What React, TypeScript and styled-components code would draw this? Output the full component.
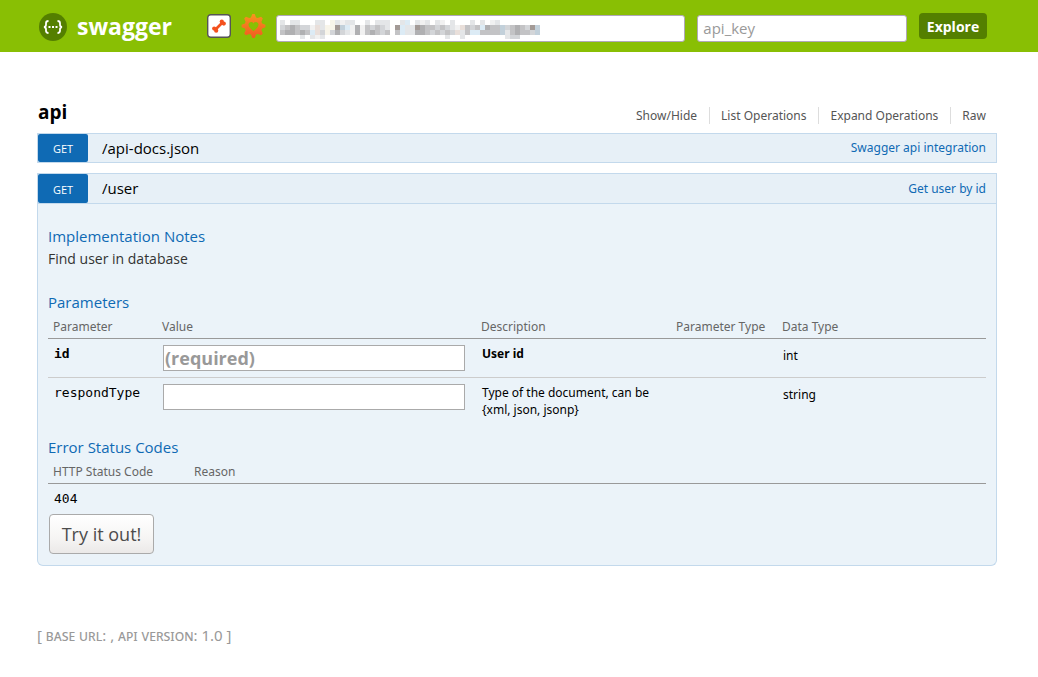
import React from "react";
import styled, { createGlobalStyle } from "styled-components";

const Global = createGlobalStyle`
  *, *::before, *::after { box-sizing: border-box; }
  body { margin: 0; background: #fff; color: #000; font-family: "Open Sans", "Noto Sans", sans-serif; font-size: 13px; }
  h2, h3, h4, p, ul { margin: 0; padding: 0; font-weight: normal; }
  ul { list-style: none; }
  a { text-decoration: none; color: inherit; }
  button, input { font-family: inherit; }
`;

const smallFont = '"Noto Sans", "Open Sans", sans-serif';

const Header = styled.header`
  background: #89bf04;
`;
const HeaderInner = styled.div`
  margin: 0 51px 0 38px;
  height: 52px;
  display: flex;
  align-items: center;
`;
const Logo = styled.a`
  display: flex;
  align-items: center;
  gap: 9px;
  color: #fff;
  font-size: 23px;
  line-height: 32px;
  font-weight: 700;
  flex: 0 0 169px;
`;
const Form = styled.form`
  display: flex;
  align-items: center;
  flex: 1;
`;
const IconButton = styled.button`
  display: flex;
  padding: 0;
  border: 0;
  background: none;
  margin-right: 10px;
`;
const FieldWrap = styled.div<{ $grow: number }>`
  flex: ${(p) => p.$grow} 1 0;
  margin: 4px 12px 0 0;
  position: relative;
`;
const HeaderInput = styled.input`
  display: block;
  width: 100%;
  height: 27px;
  padding: 0 5px;
  border: 1px solid #b0a8b8;
  border-radius: 3px;
  font-size: 15px;
  color: #333;
  background: #fff;
  &::placeholder { color: #999; opacity: 1; }
`;
const MosaicSvg = styled.svg`
  position: absolute;
  left: 4px;
  top: 5px;
`;
const Explore = styled.button`
  height: 26px;
  flex: 0 0 68px;
  padding: 0;
  border: 0;
  border-radius: 4px;
  background: #547f00;
  color: #fff;
  font-size: 14px;
  font-weight: 700;
`;

const Main = styled.main`
  margin: 46px 41px 0 37px;
`;
const ResourceHead = styled.div`
  display: flex;
  justify-content: space-between;
  align-items: flex-end;
  height: 35px;
`;
const Title = styled.h2`
  font-size: 19px;
  line-height: 28px;
  font-weight: 700;
  padding: 0 0 7px 1px;
`;
const Options = styled.ul`
  display: flex;
  padding: 0 11px 9px 0;
`;
const Option = styled.li`
  color: #555;
  font-family: ${smallFont};
  font-size: 12px;
  line-height: 17px;
  & + & { border-left: 1px solid #ddd; margin-left: 12px; padding-left: 11px; }
`;
const Operation = styled.section`
  margin-bottom: 10px;
`;
const Heading = styled.h3<{ $open?: boolean }>`
  display: flex;
  align-items: stretch;
  height: ${(p) => (p.$open ? 31 : 30)}px;
  line-height: ${(p) => (p.$open ? 29 : 28)}px;
  background: #e7f0f7;
  border: 1px solid #c3d9ec;
`;
const Method = styled.a`
  width: 50px;
  padding-top: 1px;
  background: #0f6ab4;
  color: #fff;
  border-radius: 2px;
  font-size: 11px;
  text-align: center;
`;
const Path = styled.a`
  flex: 1;
  padding-left: 14px;
  font-size: 15px;
`;
const Summary = styled.a`
  padding-right: 10px;
  color: #0f6ab4;
  font-family: ${smallFont};
  font-size: 12px;
`;
const Content = styled.div`
  background: #ebf3f9;
  border: 1px solid #c3d9ec;
  border-top: 0;
  border-radius: 0 0 6px 6px;
  padding: 21px 10px 11px;
`;
const SubHead = styled.h4`
  color: #0f6ab4;
  font-size: 15px;
  line-height: 22px;
`;
const Notes = styled.p`
  color: #333;
  font-size: 14px;
  line-height: 24px;
  margin-bottom: 20px;
`;
const Table = styled.table`
  width: 100%;
  border-collapse: collapse;
  table-layout: fixed;
  font-family: ${smallFont};
`;
const Th = styled.th<{ $w?: number }>`
  width: ${(p) => (p.$w ? p.$w + "px" : "auto")};
  padding: 5px 0 3px 5px;
  border-bottom: 1px solid #999;
  color: #666;
  font-size: 12px;
  line-height: 17px;
  font-weight: 400;
  text-align: left;
  white-space: nowrap;
`;
const Td = styled.td<{ $mono?: boolean; $bold?: boolean; $type?: boolean }>`
  padding: ${(p) => (p.$type ? 8 : 6)}px 6px 0;
  vertical-align: top;
  font-size: ${(p) => (p.$mono ? 13 : 12)}px;
  line-height: 17px;
  font-family: ${(p) => (p.$mono ? '"DejaVu Sans Mono", monospace' : "inherit")};
  font-weight: ${(p) => (p.$bold ? 700 : 400)};
`;
const Row = styled.tr`
  height: 39px;
  & + & { border-top: 1px solid #ccc; }
`;
const ValueInput = styled.input`
  display: block;
  width: 302px;
  height: 26px;
  padding: 0 1px;
  border: 1px solid #aaa;
  background: #fff;
  font-family: "Open Sans", sans-serif;
  font-size: 18px;
  font-weight: 700;
  &::placeholder { color: #999; opacity: 1; }
`;
const Codes = styled.div`
  margin-top: 18px;
`;
const Try = styled.button`
  display: block;
  width: 105px;
  height: 40px;
  margin: 7px 0 0 1px;
  padding: 0;
  border: 1px solid #aaa;
  border-radius: 4px;
  background: linear-gradient(#fff, #f6f5f4 60%, #ebe9e8);
  color: #4c4c4c;
  font-size: 18px;
`;
const Footer = styled.footer`
  margin-top: 57px;
  color: #999;
  font-family: ${smallFont};
  font-size: 15px;
  line-height: 24px;
  span { font-variant: small-caps; }
`;

const shades: Record<string, string> = {
  a: "#f1f1f1", b: "#e4e6e8", c: "#d3d5d8", d: "#c3c3c5", e: "#b0b0b2",
  f: "#a39a96", g: "#dcebf5", h: "#e9dfda", i: "#c2d0da", j: "#f8f5ea",
};
const mosaicRows = [
  "b.bb...bb.jbabb..b.bbb..bg.bab.ba.b...b.b.ab........",
  "cdedccahbjjfigaeadcdcb.fgbbfeddcdcbahdcdgeddicdedcfi",
  "deededghcjcecbaeadedcd.dgbbeedcdcdchbdggddddibdeddci",
  "....b.bab........................b..b........bcc....",
];
const Mosaic = () => (
  <MosaicSvg width="260" height="19" aria-hidden="true">
    {mosaicRows.map((row, y) =>
      row.split("").map((s, x) =>
        s === "." ? null : <rect key={x + "-" + y} x={x * 5} y={y * 5} width="5" height="5" fill={shades[s]} />,
      ),
    )}
  </MosaicSvg>
);

const gearPoints = Array.from({ length: 32 }, (_, i) => {
  const r = i % 4 < 2 ? 12 : 9;
  const a = ((i - 0.5) * Math.PI) / 16 - Math.PI / 2;
  return `${(12 + r * Math.cos(a)).toFixed(1)},${(12 + r * Math.sin(a)).toFixed(1)}`;
}).join(" ");

const App = () => (
  <>
    <Global />
    <Header>
      <HeaderInner>
        <Logo href="#">
          <svg width="30" height="30" viewBox="0 0 30 30" aria-hidden="true">
            <circle cx="15" cy="16" r="14" fill="#547f00" />
            <g transform="translate(0 1)">
              <path d="M10.500 9c-2 0-2.500.7-2.500 2.200v1.500c0 1.400-.5 2.100-2 2.300 1.500.2 2 .9 2 2.300v1.500c0 1.500.5 2.200 2.500 2.200M19.500 9c2 0 2.500.7 2.500 2.200v1.500c0 1.400.5 2.100 2 2.300-1.500.2-2 .9-2 2.300v1.500c0 1.500-.5 2.200-2.500 2.200" fill="none" stroke="#fff" strokeWidth="1.800" />
              <path d="M10.500 14h2v2h-2zM14 14h2v2h-2zM17.500 14h2v2h-2z" fill="#fff" />
            </g>
          </svg>
          swagger
        </Logo>
        <Form onSubmit={(e) => e.preventDefault()}>
          <IconButton type="button" aria-label="Show Swagger Petstore example APIs">
            <svg width="24" height="24" viewBox="0 0 24 24">
              <rect x="0.700" y="0.700" width="22.600" height="22.600" rx="3" fill="#fff" stroke="#555" strokeWidth="1.400" />
              <path d="M8 16L16 8" stroke="#f4511e" strokeWidth="2.600" />
              <g fill="#f4511e">
                <circle cx="14.800" cy="7.500" r="2.100" /><circle cx="16.800" cy="9.600" r="2.100" />
                <circle cx="7.200" cy="14.600" r="2.100" /><circle cx="9.200" cy="16.700" r="2.100" />
              </g>
            </svg>
          </IconButton>
          <IconButton type="button" aria-label="Show Wordnik Developer APIs">
            <svg width="25" height="24" viewBox="0 0 24 24">
              <defs><linearGradient id="gear" x1="0" y1="0" x2="0" y2="1"><stop offset="0" stopColor="#f7941e" /><stop offset="1" stopColor="#f15a22" /></linearGradient></defs>
              <polygon points={gearPoints} fill="url(#gear)" />
              <path d="M12 17.200C9.500 15.200 7 13.300 7 10.600c0-2.700 3.500-3.600 5-1.200 1.500-2.400 5-1.500 5 1.200 0 2.700-2.500 4.600-5 6.600z" fill="#89bf04" />
            </svg>
          </IconButton>
          <FieldWrap $grow={410}><HeaderInput aria-label="Base URL" /><Mosaic /></FieldWrap>
          <FieldWrap $grow={210}><HeaderInput aria-label="API key" placeholder="api_key" /></FieldWrap>
          <Explore type="submit">Explore</Explore>
        </Form>
      </HeaderInner>
    </Header>
    <Main>
      <ResourceHead>
        <Title>api</Title>
        <Options>
          <Option><a href="#">Show/Hide</a></Option>
          <Option><a href="#">List Operations</a></Option>
          <Option><a href="#">Expand Operations</a></Option>
          <Option><a href="#">Raw</a></Option>
        </Options>
      </ResourceHead>
      <Operation>
        <Heading><Method href="#">GET</Method><Path href="#">/api-docs.json</Path><Summary href="#">Swagger api integration</Summary></Heading>
      </Operation>
      <Operation>
        <Heading $open><Method href="#">GET</Method><Path href="#">/user</Path><Summary href="#">Get user by id</Summary></Heading>
        <Content>
          <SubHead>Implementation Notes</SubHead>
          <Notes>Find user in database</Notes>
          <SubHead>Parameters</SubHead>
          <Table>
            <thead><tr><Th $w={109}>Parameter</Th><Th $w={319}>Value</Th><Th $w={195}>Description</Th><Th $w={106}>Parameter Type</Th><Th>Data Type</Th></tr></thead>
            <tbody>
              <Row><Td $mono $bold>id</Td><Td><ValueInput aria-label="id" placeholder="(required)" /></Td><Td $bold>User id</Td><Td /><Td $type>int</Td></Row>
              <Row><Td $mono>respondType</Td><Td><ValueInput aria-label="respondType" /></Td><Td>Type of the document, can be {"{xml, json, jsonp}"}</Td><Td /><Td $type>string</Td></Row>
            </tbody>
          </Table>
          <Codes>
            <SubHead>Error Status Codes</SubHead>
            <Table>
              <thead><tr><Th $w={141}>HTTP Status Code</Th><Th>Reason</Th></tr></thead>
              <tbody><tr><Td $mono>404</Td><Td /></tr></tbody>
            </Table>
          </Codes>
          <Try type="button">Try it out!</Try>
        </Content>
      </Operation>
      <Footer>[ <span>base url</span>: , <span>api version</span>: 1.0 ]</Footer>
    </Main>
  </>
);
export default App;
